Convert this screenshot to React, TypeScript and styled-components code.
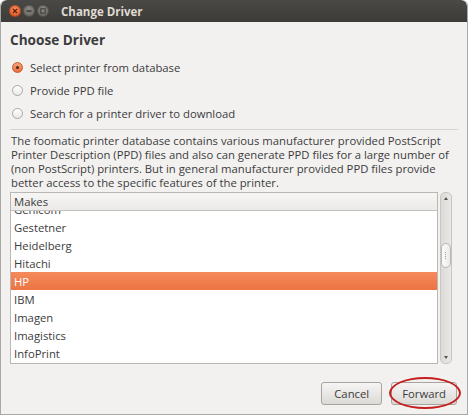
import React from "react";
import styled, { createGlobalStyle } from "styled-components";

const GlobalStyle = createGlobalStyle`
  html, body {
    margin: 0;
    padding: 0;
    background: #ffffff;
  }
  body {
    font-family: "Open Sans", "DejaVu Sans", sans-serif;
    color: #3c3c3c;
  }
`;

const Window = styled.div`
  width: 468px;
  height: 415px;
  box-sizing: border-box;
  display: flex;
  flex-direction: column;
  background: #f2f1f0;
  border: 1px solid #a8a8a8;
  border-top: none;
  border-radius: 6px 6px 0 0;
  overflow: hidden;
`;

const TitleBar = styled.div`
  height: 22px;
  flex-shrink: 0;
  display: flex;
  align-items: center;
  padding-left: 8px;
  background: linear-gradient(#4a4945, #3c3b37);
  border-radius: 6px 6px 0 0;
`;

const WinButtons = styled.div`
  display: flex;
  gap: 2px;
  margin-right: 12px;
`;

const WinButton = styled.div<{ $close?: boolean }>`
  width: 12px;
  height: 12px;
  border-radius: 50%;
  display: flex;
  align-items: center;
  justify-content: center;
  background: ${(p) =>
    p.$close
      ? "radial-gradient(circle at 50% 35%, #f58a5c, #dd4814)"
      : "radial-gradient(circle at 50% 35%, #8a8882, #5f5e59)"};
  box-shadow: inset 0 0 0 1px rgba(0, 0, 0, 0.25);
`;

const Title = styled.div`
  font-weight: bold;
  font-size: 11.5px;
  color: #dfdbd2;
`;

const Body = styled.div`
  flex: 1;
  display: flex;
  flex-direction: column;
  padding: 0 9px 0 9px;
  font-size: 11.3px;
`;

const Heading = styled.h1`
  margin: 8px 0 6px 0;
  font-size: 13.6px;
  font-weight: bold;
  color: #3c3c3c;
  line-height: 20px;
`;

const RadioRow = styled.label`
  display: flex;
  align-items: center;
  height: 23px;
  color: #3c3c3c;
  padding-left: 2px;
`;

const RadioDot = styled.span<{ $checked?: boolean }>`
  width: 11px;
  height: 11px;
  border-radius: 50%;
  box-sizing: border-box;
  margin-right: 7px;
  display: flex;
  align-items: center;
  justify-content: center;
  border: 1px solid ${(p) => (p.$checked ? "#c9582a" : "#a9a7a3")};
  background: ${(p) =>
    p.$checked
      ? "linear-gradient(#f7a27c, #ea6c3a)"
      : "linear-gradient(#ffffff, #ebe9e7)"};
  &::after {
    content: "";
    display: ${(p) => (p.$checked ? "block" : "none")};
    width: 3px;
    height: 3px;
    border-radius: 50%;
    background: #4a2a1c;
  }
`;

const Separator = styled.hr`
  border: none;
  border-top: 1px solid #d5d3cf;
  margin: 4px 0 4px 0;
`;

const Paragraph = styled.p`
  margin: 0;
  line-height: 14px;
  color: #3c3c3c;
  padding-left: 1px;
  white-space: nowrap;
`;

const ListArea = styled.div`
  display: flex;
  gap: 1px;
  margin-top: 2px;
  height: 172px;
`;

const ListBox = styled.div`
  flex: 1;
  display: flex;
  flex-direction: column;
  border: 1px solid #b9b7b3;
  background: #ffffff;
`;

const ListHeader = styled.div`
  height: 17px;
  flex-shrink: 0;
  display: flex;
  align-items: center;
  padding-left: 3px;
  color: #3c3c3c;
  background: linear-gradient(#f7f6f5, #ebeae8);
  border-bottom: 1px solid #c4c2be;
`;

const ListViewport = styled.div`
  flex: 1;
  overflow: hidden;
`;

const ListInner = styled.div`
  margin-top: -11px;
`;

const Row = styled.div<{ $selected?: boolean }>`
  height: 18px;
  display: flex;
  align-items: center;
  padding-left: 3px;
  color: ${(p) => (p.$selected ? "#ffffff" : "#3c3c3c")};
  background: ${(p) =>
    p.$selected ? "linear-gradient(#f58a5c, #ec7443)" : "transparent"};
`;

const ScrollTrack = styled.div`
  width: 10px;
  margin-right: 6px;
  margin-left: 1px;
  display: flex;
  flex-direction: column;
  align-items: center;
  border: 1px solid #c8c6c2;
  border-radius: 5px;
  background: linear-gradient(90deg, #dddbd8, #e9e8e6);
  position: relative;
`;

const Arrow = styled.span<{ $down?: boolean }>`
  width: 0;
  height: 0;
  margin: ${(p) => (p.$down ? "auto 0 4px 0" : "4px 0 0 0")};
  border-left: 2.5px solid transparent;
  border-right: 2.5px solid transparent;
  ${(p) =>
    p.$down ? "border-top: 3px solid #55544f;" : "border-bottom: 3px solid #55544f;"}
`;

const Thumb = styled.div`
  position: absolute;
  left: 0;
  top: 50px;
  width: 8px;
  height: 23px;
  border: 1px solid #b9b7b3;
  border-radius: 5px;
  background: linear-gradient(90deg, #fbfbfa, #ecebe9);
  display: flex;
  align-items: center;
  justify-content: center;
  &::after {
    content: "";
    width: 1px;
    height: 7px;
    border-left: 1px dotted #a6a49f;
  }
`;

const ButtonBar = styled.div`
  margin-top: auto;
  margin-bottom: 9px;
  display: flex;
  justify-content: flex-end;
  gap: 9px;
  padding-right: 1px;
`;

const Button = styled.button<{ $circled?: boolean }>`
  height: 23px;
  padding: 0 ${(p) => (p.$circled ? "10px" : "12px")};
  font-family: "Open Sans", "DejaVu Sans", sans-serif;
  font-size: 11.3px;
  color: #3c3c3c;
  border: 1px solid #a6a49f;
  border-radius: 3px;
  background: linear-gradient(#f6f5f4, #dcdad6);
  position: relative;
  ${(p) =>
    p.$circled
      ? `&::after {
    content: "";
    position: absolute;
    left: -3px;
    right: -5px;
    top: -6px;
    bottom: -5px;
    border: 2px solid #c41e1e;
    border-radius: 50%;
  }`
      : ""}
`;

const makes = [
  "Genicom",
  "Gestetner",
  "Heidelberg",
  "Hitachi",
  "HP",
  "IBM",
  "Imagen",
  "Imagistics",
  "InfoPrint",
  "Infotec",
];

export default function App() {
  return (
    <>
      <GlobalStyle />
      <Window>
        <TitleBar>
          <WinButtons>
            <WinButton $close>
              <svg width="6" height="6" viewBox="0 0 6 6">
                <path d="M1 1 L5 5 M5 1 L1 5" stroke="#5a1d08" strokeWidth="1.2" />
              </svg>
            </WinButton>
            <WinButton>
              <svg width="6" height="6" viewBox="0 0 6 6">
                <path d="M0.5 3 H5.5" stroke="#3c3b37" strokeWidth="1.4" />
              </svg>
            </WinButton>
            <WinButton>
              <svg width="6" height="6" viewBox="0 0 6 6">
                <rect x="0.8" y="0.8" width="4.4" height="4.4" fill="none" stroke="#3c3b37" strokeWidth="1" />
              </svg>
            </WinButton>
          </WinButtons>
          <Title>Change Driver</Title>
        </TitleBar>
        <Body>
          <Heading>Choose Driver</Heading>
          <RadioRow>
            <RadioDot $checked />
            Select printer from database
          </RadioRow>
          <RadioRow>
            <RadioDot />
            Provide PPD file
          </RadioRow>
          <RadioRow>
            <RadioDot />
            Search for a printer driver to download
          </RadioRow>
          <Separator />
          <Paragraph>
            The foomatic printer database contains various manufacturer provided PostScript
            <br />
            Printer Description (PPD) files and also can generate PPD files for a large number of
            <br />
            (non PostScript) printers. But in general manufacturer provided PPD files provide
            <br />
            better access to the specific features of the printer.
          </Paragraph>
          <ListArea>
            <ListBox>
              <ListHeader>Makes</ListHeader>
              <ListViewport>
                <ListInner>
                  {makes.map((m) => (
                    <Row key={m} $selected={m === "HP"}>
                      {m}
                    </Row>
                  ))}
                </ListInner>
              </ListViewport>
            </ListBox>
            <ScrollTrack>
              <Arrow />
              <Thumb />
              <Arrow $down />
            </ScrollTrack>
          </ListArea>
          <ButtonBar>
            <Button>Cancel</Button>
            <Button $circled>Forward</Button>
          </ButtonBar>
        </Body>
      </Window>
    </>
  );
}
